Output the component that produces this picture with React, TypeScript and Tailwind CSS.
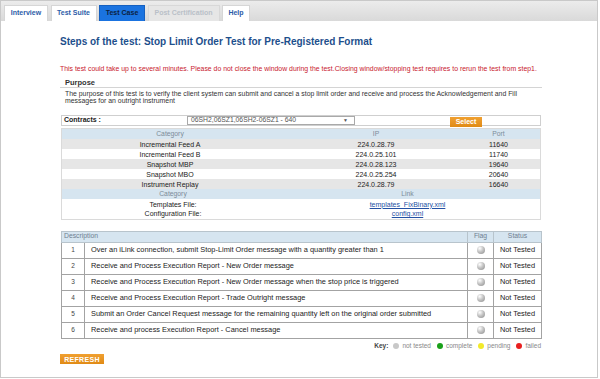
const tabs = [
  { label: "Interview", w: "w-[44px]", kind: "normal" },
  { label: "Test Suite", w: "w-[46px]", kind: "normal" },
  { label: "Test Case", w: "w-[46px]", kind: "active" },
  { label: "Post Certification", w: "w-[72px]", kind: "disabled" },
  { label: "Help", w: "w-[28px]", kind: "normal" },
];

const feeds = [
  ["Incremental Feed A", "224.0.28.79", "11640"],
  ["Incremental Feed B", "224.0.25.101", "11740"],
  ["Snapshot MBP", "224.0.28.123", "19640"],
  ["Snapshot MBO", "224.0.25.254", "20640"],
  ["Instrument Replay", "224.0.28.79", "16640"],
];

const steps = [
  "Over an iLink connection, submit Stop-Limit Order message with a quantity greater than 1",
  "Receive and Process Execution Report - New Order message",
  "Receive and Process Execution Report - New Order message when the stop price is triggered",
  "Receive and Process Execution Report - Trade Outright message",
  "Submit an Order Cancel Request message for the remaining quantity left on the original order submitted",
  "Receive and process Execution Report - Cancel message",
];

function Sphere() {
  return (
    <span className="inline-block w-[8px] h-[8px] rounded-full bg-[radial-gradient(circle_at_35%_30%,#ffffff_0%,#c4c4c4_45%,#8a8a8a_100%)]" />
  );
}

export default function App() {
  return (
    <div className="w-[600px] h-[379px] bg-white font-['Liberation_Sans',Arial,sans-serif] overflow-hidden">
      <div className="w-[598px] h-[378px] border border-[#c9c9c9] flex flex-col">
        {/* tab bar */}
        <div className="h-[20px] shrink-0 bg-gradient-to-b from-[#ececec] to-[#d9d9d9] flex items-end pl-[3px] gap-[2.5px]">
          {tabs.map((t) => (
            <div
              key={t.label}
              className={
                t.w +
                " h-[16px] flex items-center justify-center text-[7px] font-bold whitespace-nowrap border-t border-x " +
                (t.kind === "active"
                  ? "bg-[#1a73e0] border-[#1560c0] text-[#0c1f3f]"
                  : t.kind === "disabled"
                  ? "bg-[#e6e6e6] border-[#d8d8d8] text-[#b9c0c8]"
                  : "bg-white border-[#d6d6d6] text-[#2d5ca8]")
              }
            >
              {t.label}
            </div>
          ))}
        </div>

        <div className="pl-[59px] w-[541px]">
          {/* title */}
          <div className="mt-[15px] text-[10px] leading-[12px] font-bold text-[#1d4f8c] whitespace-nowrap">
            Steps of the test: Stop Limit Order Test for Pre-Registered Format
          </div>

          {/* warning */}
          <div className="mt-[17px] text-[6.9px] leading-[8px] text-[#c8202e] whitespace-nowrap">
            This test could take up to several minutes. Please do not close the window during the test.Closing window/stopping test requires to rerun the test from step1.
          </div>

          {/* purpose */}
          <div className="mt-[4.5px] h-[10px] pl-[5px] border-b border-[#d4d4d4] text-[7.5px] leading-[9px] font-bold text-[#333]">
            Purpose
          </div>
          <div className="mt-[2.5px] pl-[5px] text-[6.9px] leading-[7.3px] text-[#333] whitespace-nowrap">
            The purpose of this test is to verify the client system can submit and cancel a stop limit order and receive and process the Acknowledgement and Fill
            <br />
            messages for an outright instrument
          </div>

          {/* contracts */}
          <div className="mt-[10.5px] ml-[1px] w-[480px] h-[11px] border border-[#cfcfcf] flex items-center">
            <div className="w-[125px] pl-[2px] text-[7px] font-bold text-[#222]">Contracts :</div>
            <div className="w-[168px] h-[9px] border border-[#a9a9a9] bg-white flex items-center justify-between pl-[3px] pr-[6px] text-[6.8px] text-[#555] leading-none">
              <span>06SH2,06SZ1,06SH2-06SZ1 - 640</span>
              <span className="text-[5px]">▼</span>
            </div>
            <div className="ml-[95px] w-[32px] h-[10px] mt-[2px] bg-gradient-to-b from-[#f0a030] to-[#e08a14] text-white text-[7px] font-bold flex items-center justify-center leading-none">
              Select
            </div>
          </div>

          {/* category table */}
          <div className="mt-[2px] ml-[1px] w-[480px] border border-[#dadada]">
            <div className="grid grid-cols-[216px_196px_1fr] h-[10px] items-center bg-[#d6e5f0] text-[6.8px] text-[#7d8c99] text-center leading-none">
              <div>Category</div>
              <div>IP</div>
              <div className="pr-[17px]">Port</div>
            </div>
            {feeds.map((f, i) => (
              <div
                key={f[0]}
                className={
                  "grid grid-cols-[216px_196px_1fr] h-[10px] items-center text-[7px] text-[#222] text-center leading-none " +
                  (i % 2 === 0 ? "bg-[#e6e6e6]" : "bg-white")
                }
              >
                <div>{f[0]}</div>
                <div>{f[1]}</div>
                <div className="pr-[17px]">{f[2]}</div>
              </div>
            ))}
            <div className="grid grid-cols-[222px_1fr] h-[10px] items-center bg-[#d6e5f0] text-[6.8px] text-[#7d8c99] text-center leading-none">
              <div>Category</div>
              <div className="pr-[9px]">Link</div>
            </div>
            <div className="grid grid-cols-[222px_1fr] h-[10px] items-center text-[7px] text-[#222] text-center leading-none">
              <div>Templates File:</div>
              <div className="pr-[9px] text-[#2451a3] underline">templates_FixBinary.xml</div>
            </div>
            <div className="grid grid-cols-[222px_1fr] h-[9.5px] items-center text-[7px] text-[#222] text-center leading-none">
              <div>Configuration File:</div>
              <div className="pr-[9px] text-[#2451a3] underline">config.xml</div>
            </div>
          </div>

          {/* steps table */}
          <table className="mt-[11px] ml-[1px] w-[480px] table-fixed border-collapse">
            <colgroup>
              <col className="w-[23px]" />
              <col className="w-[383px]" />
              <col className="w-[26px]" />
              <col className="w-[48px]" />
            </colgroup>
            <thead>
              <tr className="h-[11px] bg-[#d6e5f0] text-[6.8px] text-[#6f8091] leading-none">
                <th colSpan={2} className="border border-[#b8c4cc] text-left pl-[2px] font-normal">Description</th>
                <th className="border border-[#b8c4cc] font-normal">Flag</th>
                <th className="border border-[#b8c4cc] font-normal">Status</th>
              </tr>
            </thead>
            <tbody>
              {steps.map((s, i) => (
                <tr key={i} className="h-[16px] text-[7.4px] text-[#222] leading-none">
                  <td className="border border-[#a3a3a3] text-center text-[6.5px] text-[#444]">{i + 1}</td>
                  <td className="border border-[#a3a3a3] pl-[6px] whitespace-nowrap overflow-hidden">{s}</td>
                  <td className="border border-[#a3a3a3] text-center">
                    <div className="flex items-center justify-center">
                      <Sphere />
                    </div>
                  </td>
                  <td className="border border-[#a3a3a3] text-center whitespace-nowrap">Not Tested</td>
                </tr>
              ))}
            </tbody>
          </table>

          {/* key */}
          <div className="mt-[3.5px] ml-[1px] w-[480px] flex justify-end items-center text-[6.5px] leading-[8px] text-[#888] gap-[3px]">
            <span className="font-bold text-[#444]">Key:</span>
            <span className="ml-[2px] inline-block w-[6px] h-[6px] rounded-full bg-[#c8c8c8]" />
            <span>not tested</span>
            <span className="ml-[3px] inline-block w-[6px] h-[6px] rounded-full bg-[#1aa01a]" />
            <span>complete</span>
            <span className="ml-[3px] inline-block w-[6px] h-[6px] rounded-full bg-[#f2ea2a]" />
            <span>pending</span>
            <span className="ml-[3px] inline-block w-[6px] h-[6px] rounded-full bg-[#e82020]" />
            <span>failed</span>
          </div>

          {/* refresh */}
          <div className="mt-[4px] w-[44px] h-[10px] bg-gradient-to-b from-[#f0a030] to-[#e08a14] text-white text-[7px] font-bold flex items-center justify-center leading-none tracking-[0.3px]">
            REFRESH
          </div>
        </div>
      </div>
    </div>
  );
}
